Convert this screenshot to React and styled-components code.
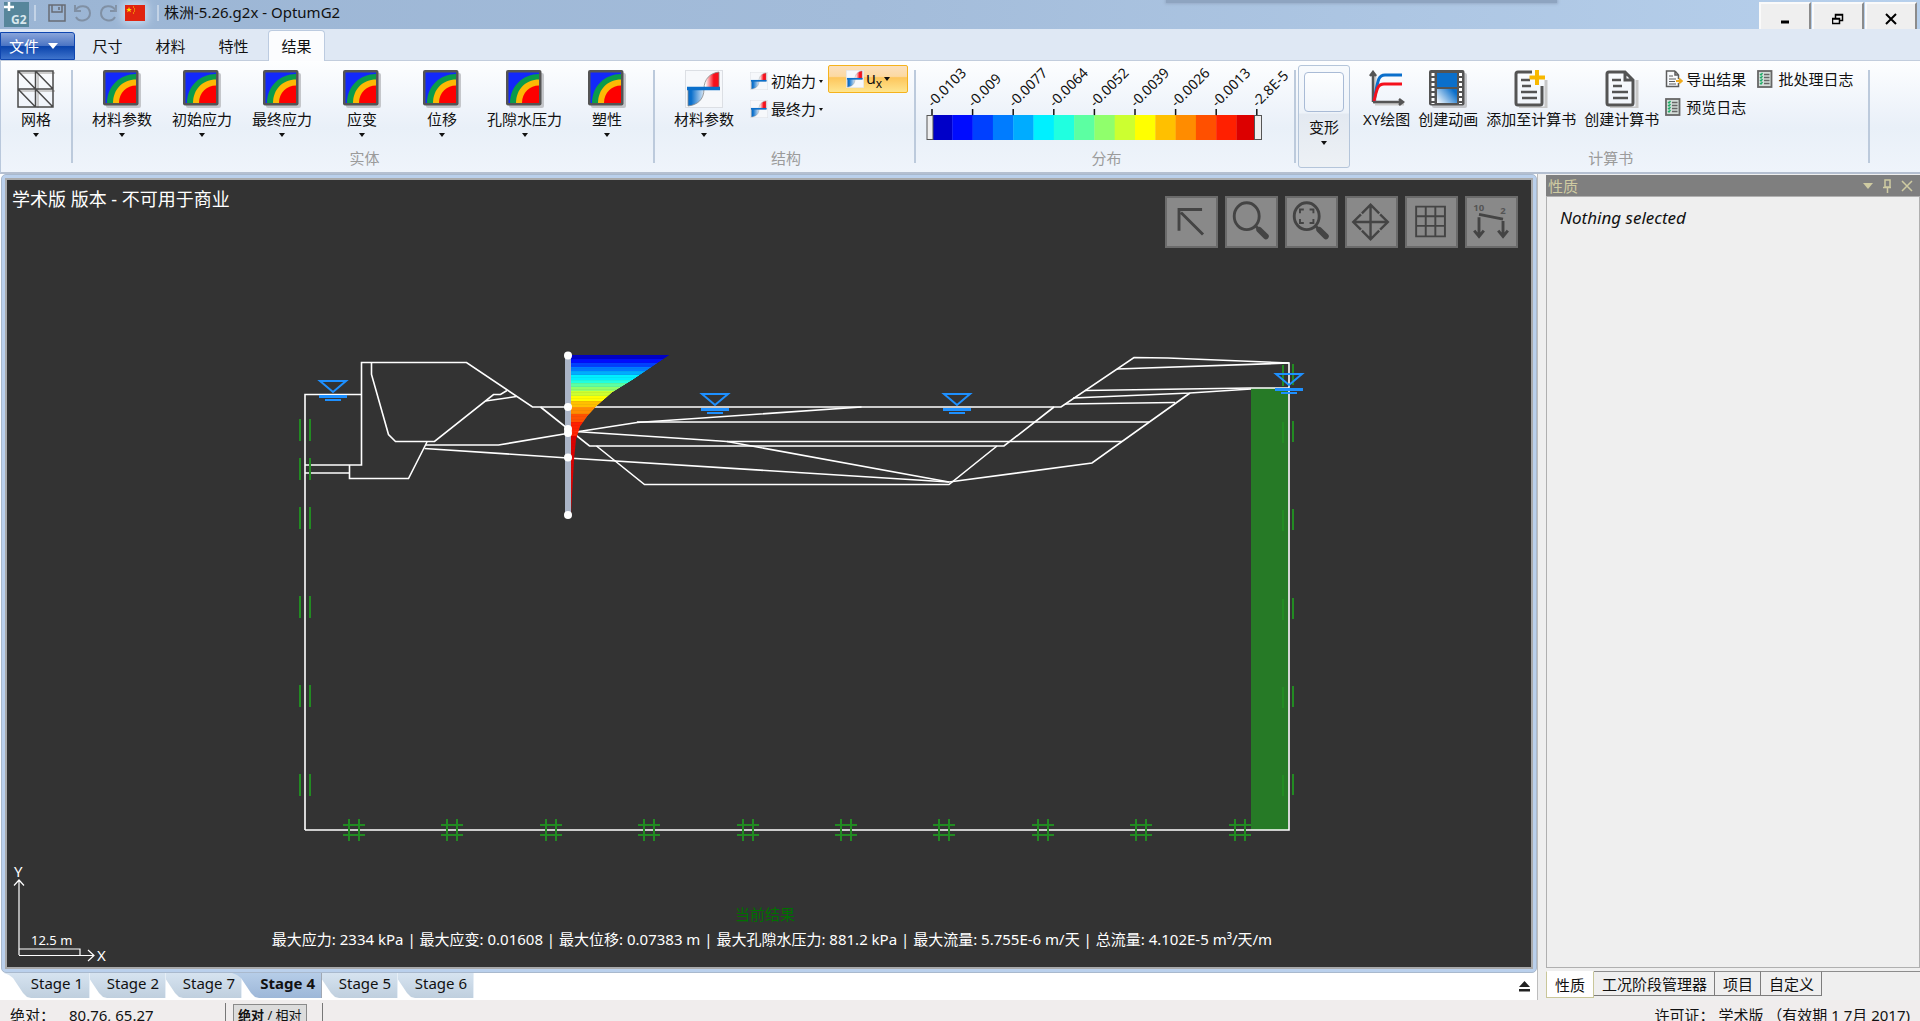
import React from 'react';
import styled, { createGlobalStyle } from 'styled-components';

const GlobalStyle = createGlobalStyle`
  * { box-sizing: border-box; }
  body {
    margin: 0;
    overflow: hidden;
    background: #efefef;
    color: #111;
    font: 15px/20px 'Noto Sans', 'Noto Sans CJK SC', sans-serif;
  }
  button {
    margin: 0;
    padding: 0;
    border: 0;
    background: none;
    color: inherit;
    font: inherit;
    white-space: nowrap;
  }
  svg { display: block; flex: none; }
`;

const Page = styled.div`
  display: flex;
  flex-direction: column;
  height: 100vh;
`;

/* ---------- title bar ---------- */

const TitleBar = styled.header`
  display: flex;
  flex: none;
  height: 29px;
  padding: 2px 3px 0 4px;
  align-items: flex-start;
  background: linear-gradient(90deg, #9bb5d4, #a3bcda 45%, #b7d0ec);
`;
const QuickTools = styled.div`
  display: flex;
  align-items: center;
  gap: 7px;
  margin: 3px 0 0 5px;
  padding: 0 12px;
  border-left: 2px solid #c3d3e6;
  border-right: 2px solid #c3d3e6;
  height: 16px;
`;
const FlagButton = styled.button`
  border-radius: 2px;
  box-shadow: 0 0 8px 3px #c9dcef;
`;
const WindowTitle = styled.h1`
  margin: 0 0 0 5px;
  flex: 1;
  font-size: 15px;
  line-height: 20px;
  font-weight: 400;
`;
const NotchShadow = styled.div`
  position: absolute;
  top: 0;
  right: 363px;
  width: 391px;
  height: 3px;
  background: #8ea4c0;
  box-shadow: 0 0 3px 1px #96abc6;
`;
const WindowButtons = styled.div`
  display: flex;
  gap: 1px;
`;
const WindowButton = styled.button`
  display: flex;
  width: 52px;
  height: 27px;
  padding-top: 4px;
  align-items: center;
  justify-content: center;
  background: #efefef;
  border: 2px solid #fafafa;
  border-right-color: #8b8b8b;
  border-bottom: 0;
`;

/* ---------- ribbon tabs ---------- */

const TabRow = styled.nav`
  display: flex;
  flex: none;
  height: 32px;
  align-items: flex-end;
  background: #dfe8f4;
  border-bottom: 1px solid #c2cddd;
`;
const FileButton = styled.button`
  display: flex;
  width: 75px;
  height: 28px;
  margin-right: 4px;
  padding-left: 8px;
  align-items: center;
  gap: 9px;
  color: #fff;
  border: 1px solid #0f46b0;
  border-radius: 0 3px 0 0;
  background: linear-gradient(#8aa5da, #4c75c4 48%, #0b44ac 52%, #3f74cc);
`;
const RibbonTab = styled.button`
  width: 57px;
  height: ${p => (p.$active ? 31 : 30)}px;
  margin: 0 6px ${p => (p.$active ? -1 : 0)}px 0;
  border-radius: 4px 4px 0 0;
  border: 1px solid ${p => (p.$active ? '#bccbe0' : 'transparent')};
  border-bottom: 0;
  background: ${p => (p.$active ? '#fbfcfe' : 'none')};
`;

/* ---------- ribbon ---------- */

const Ribbon = styled.section`
  display: flex;
  flex: none;
  height: 113px;
  border-left: 1px solid #b9c8dc;
  border-bottom: 2px solid #b4bfd0;
  background: linear-gradient(#fdfeff, #eef3fa 45%, #e9f0f8 60%, #eff4fb);
`;
const Group = styled.div`
  display: flex;
  flex-direction: column;
  padding: 4px 6px 4px 9px;
`;
const MeshGroup = styled(Group)`
  padding: 4px 5px;
`;
const GroupBody = styled.div`
  display: flex;
  flex: 1;
  align-items: flex-start;
`;
const GroupTitle = styled.div`
  text-align: center;
  color: #9b9b9b;
`;
const Separator = styled.div`
  width: 2px;
  margin: 9px 0;
  background: #bccadc;
`;
const BigButton = styled.button`
  display: flex;
  flex-direction: column;
  align-items: center;
  min-width: ${p => p.$min || 0}px;
  padding: 4px ${p => (p.$tight ? 4 : 5)}px 0;
`;
const BigIcon = styled.span`
  display: flex;
  height: 40px;
  align-items: center;
`;
const Arrow = styled.span`
  width: 0;
  height: 0;
  margin-top: ${p => (p.$below ? 4 : 0)}px;
  border: ${p => p.$size || 3}px solid transparent;
  border-top: ${p => (p.$size || 3) + 1}px solid currentColor;
  border-bottom: 0;
`;
const SmallColumn = styled.div`
  display: flex;
  flex-direction: column;
  padding: ${p => (p.$force ? '2px 5px 0 6px' : '0 9px 0 2px')};
`;
const SmallButton = styled.button`
  display: flex;
  height: 28px;
  align-items: center;
  gap: 3px;
`;
const DirectionButton = styled.button`
  display: flex;
  width: 80px;
  height: 28px;
  align-items: center;
  justify-content: center;
  gap: 2px;
  border: 1px solid #f5b21c;
  border-radius: 2px;
  background: linear-gradient(#fbe0bd, #fcd9a2 40%, #fdc65c 45%, #fee58f);
  font-size: 16px;
  sub { font-size: 12px; line-height: 12px; }
`;
const DeformButton = styled.button`
  display: flex;
  flex-direction: column;
  align-items: center;
  width: 52px;
  margin: 4px 0 4px 2px;
  padding-top: 6px;
  border: 1px solid #b4c5da;
  border-radius: 3px;
  background: linear-gradient(#f7fafd, #eef3f9 46%, #e3e9f1 48%, #edf1f5);
`;
const DeformSwatch = styled.span`
  width: 40px;
  height: 40px;
  margin-bottom: 5px;
  border: 1px solid #a9bbd6;
  border-radius: 4px;
  background: linear-gradient(#fdfeff, #eff4fa);
`;
const LegendChart = styled.svg`
  overflow: visible;
`;

/* ---------- work area ---------- */

const Work = styled.main`
  display: flex;
  flex: 1;
  min-height: 0;
`;
const Left = styled.section`
  display: flex;
  flex-direction: column;
  flex: 1;
  min-width: 0;
  padding-left: 1px;
  background: #fff;
`;
const Frame = styled.div`
  flex: 1;
  display: flex;
  min-height: 0;
  border: 1px solid #a9b9cd;
  border-radius: 5px;
  padding: 3px;
  background: #bad0ec;
`;
const Viewport = styled.div`
  position: relative;
  flex: 1;
  border: 2px solid #a9aaab;
  background: #333;
  color: #fff;
`;
const Scene = styled.svg`
  width: 100%;
  height: 100%;
`;
const Overlay = styled.div`
  position: absolute;
  inset: 0;
  display: flex;
  flex-direction: column;
  justify-content: space-between;
  padding: 8px 13px 15px 5px;
`;
const OverlayTop = styled.div`
  display: flex;
  justify-content: space-between;
  font-size: 18px;
  line-height: 22px;
`;
const ViewTools = styled.div`
  display: flex;
  gap: 7px;
  padding-top: 8px;
`;
const ViewTool = styled.button`
  width: 53px;
  height: 52px;
  border: 2px solid #6b6b6b;
  background: #898989;
`;
const Summary = styled.div`
  text-align: center;
  line-height: 25px;
`;
const CurrentResult = styled.div`
  color: #007000;
`;
const Totals = styled.div`
  padding-left: 14px;
`;

/* ---------- stage tabs ---------- */

const StageRow = styled.div`
  display: flex;
  flex: none;
  height: 27px;
  padding: 0 7px 0 3px;
  justify-content: space-between;
  background: #fff;
`;
const StageTabs = styled.div`
  display: flex;
  isolation: isolate;
`;
const StageTab = styled.button`
  position: relative;
  z-index: ${p => p.$z};
  width: ${p => (p.$active ? 90 : 86)}px;
  height: 25px;
  padding: 0 6px 5px 0;
  text-align: right;
  font-weight: ${p => (p.$active ? 700 : 400)};
  background: ${p => (p.$active
    ? 'linear-gradient(#b6cde8, #9db7d8)'
    : 'linear-gradient(#d6e3f0, #bfcfde)')};
  border-right: 1px solid ${p => (p.$active ? '#a0a8b4' : '#e6eef6')};
  clip-path: polygon(0 0, 5px 2px, 9px 5px, 15px 14px, 19px 20px, 23px 24px, 27px 25px, 100% 100%, 100% 0);
  & + & { margin-left: -10px; }
`;

/* ---------- side panel ---------- */

const Side = styled.aside`
  display: flex;
  flex-direction: column;
  width: 383px;
  padding: 1px 0 2px 8px;
  border-left: 1px solid #bdbdbd;
`;
const SideHeader = styled.header`
  display: flex;
  height: 21px;
  padding: 0 7px 0 2px;
  align-items: center;
  justify-content: space-between;
  color: #cfcba2;
  background: #7f7f7f;
`;
const SideIcons = styled.div`
  display: flex;
  align-items: center;
  gap: 9px;
`;
const SideBody = styled.div`
  flex: 1;
  padding: 11px 13px;
  border: 1px solid #b0b0b0;
  font-size: 17px;
  font-style: italic;
`;
const SideTabs = styled.div`
  display: flex;
  height: 30px;
  align-items: flex-start;
  padding-top: 3px;
  background: linear-gradient(#efefef 3px, #8d8d8d 3px, #8d8d8d 4px, #efefef 4px);
`;
const SideTab = styled.button`
  height: ${p => (p.$active ? 27 : 25)}px;
  padding: 0 ${p => (p.$active ? 8 : 7)}px 0 8px;
  border: 1px solid ${p => (p.$active ? '#c9c79a' : '#7d7d7d')};
  border-left-width: ${p => (p.$active ? 1 : 0)}px;
  border-top-color: ${p => (p.$active ? '#fff' : '#8d8d8d')};
  background: ${p => (p.$active ? '#fff' : '#efefef')};
`;

/* ---------- status bar ---------- */

const StatusBar = styled.footer`
  display: flex;
  flex: none;
  height: 21px;
  padding: 3px 10px 0;
  overflow: hidden;
  background: #f0eded;
`;
const Coordinates = styled.div`
  display: flex;
  width: 215px;
  gap: 14px;
  padding-top: 2px;
`;
const ModeCell = styled.div`
  padding: 1px 15px 0 7px;
  border-left: 1px solid #777;
  border-right: 1px solid #777;
`;
const ModeButton = styled.button`
  height: 24px;
  padding: 0 4px 4px;
  border: 1px solid #8a8a8a;
  background: #dcdcdc;
  font-size: 13px;
`;
const Licence = styled.div`
  margin-left: auto;
  padding-top: 2px;
`;

/* ---------- icons ---------- */

const MeshIcon = () => (
  <svg width="38" height="38" viewBox="0 0 38 38" fill="none">
    <path d="M3 3h36v36M3 21h36M21 3v36" stroke="#ccc" strokeWidth="2" />
    <path d="M1 1h35v36H1zM1 19h35M18.500 1v36M1 1l35 36M18.500 1L36 19M1 19l17.500 18" stroke="#4a4a4a" strokeWidth="1.500" />
  </svg>
);

const ContourIcon = () => (
  <svg width="38" height="38" viewBox="0 0 38 38">
    <rect x="3" y="3" width="35" height="35" rx="2" fill="#c4c6ca" />
    <rect width="35.500" height="35.500" rx="2" fill="#545454" />
    <rect x="2.500" y="2.500" width="30.500" height="30.500" fill="#1228fb" />
    <path d="M33 33H4C4 16 17 4 33 4z" fill="#0a9b4b" />
    <path d="M33 33H10C10 19 20 9.500 33 9.500z" fill="#fdb904" />
    <path d="M33 33H16C16 22 24 15.500 33 15.500z" fill="#fe0000" />
  </svg>
);

const ForceIcon = ({ size }) => (
  <svg width={size} height={size} viewBox="0 0 38 38">
    <defs>
      <linearGradient id="forceRed"><stop offset="0.100" stopColor="#fff" /><stop offset="0.650" stopColor="#f8101c" /></linearGradient>
      <linearGradient id="forceBlue"><stop offset="0.200" stopColor="#0a6fcb" /><stop offset="1" stopColor="#dce9f6" /></linearGradient>
    </defs>
    <rect x="0.500" y="0.500" width="37" height="37" fill="#f6f8fb" stroke="#dcdfe4" />
    <path d="M34 19V2c-9 1-15 7-15 17z" fill="url(#forceRed)" stroke="#888" strokeWidth="0.800" />
    <path d="M3 19v17c9-1 16-6 16-17z" fill="url(#forceBlue)" stroke="#888" strokeWidth="0.800" />
    <path d="M2 18.500h33" stroke="#0a6fcb" strokeWidth="3.500" />
  </svg>
);

const PlotIcon = () => (
  <svg width="36" height="38" viewBox="0 0 36 38" fill="none">
    <path d="M6 34h29M6 34V5" stroke="#ccc" strokeWidth="3" />
    <path d="M4 32h28M4 32V4M1 6l3-4 3 4M30 29l4 3-4 3" stroke="#555" strokeWidth="2.500" />
    <path d="M5 31C9 10 9 5 16 5h17" stroke="#0a6fcb" strokeWidth="3" />
    <path d="M5 31C8 18 9 14 15 14h18" stroke="#f5101c" strokeWidth="3" />
  </svg>
);

const FilmIcon = () => (
  <svg width="38" height="38" viewBox="0 0 38 38">
    <defs>
      <linearGradient id="film" x1="1" y1="0.400" x2="0" y2="1"><stop offset="0" stopColor="#0a6fcb" /><stop offset="1" stopColor="#fff" /></linearGradient>
    </defs>
    <rect x="3" y="3" width="35" height="35" rx="2" fill="#c4c6ca" />
    <rect width="35.500" height="35.500" rx="2" fill="#545454" />
    <rect x="8" y="3" width="20" height="14" fill="#0a6fcb" />
    <rect x="8" y="19" width="20" height="14" fill="url(#film)" />
    <path d="M4 3v31M31.500 3v31" stroke="#fff" strokeWidth="3" strokeDasharray="3 2" />
  </svg>
);

const PageIcon = ({ plus }) => (
  <svg width="34" height="38" viewBox="0 0 34 38" fill="none" strokeWidth="3">
    <path d="M5 38h27V10" stroke="#c8c8c8" />
    <path d={plus ? 'M18 2H4q-2 0-2 2v29q0 2 2 2h22q2 0 2-2V16' : 'M20 2H4q-2 0-2 2v29q0 2 2 2h22q2 0 2-2V10zM20 2v8h8'} stroke="#545454" />
    <path d="M7 10h9M8 16h9M7 22h16M8 28h15" stroke="#545454" strokeWidth="2.500" />
    {plus && <path d="M23 0v15M15.500 7.500H31" stroke="#f8b800" strokeWidth="4" />}
  </svg>
);

const ExportIcon = () => (
  <svg width="18" height="18" viewBox="0 0 18 18" fill="none">
    <path d="M10 1H1.500v15.500h12V13M10 1l3.500 4v4M10 1v4h3" stroke="#5c5c5c" strokeWidth="1.500" />
    <path d="M4 6h4M4 9h7M4 11.500h6M4 14h7" stroke="#5c5c5c" />
    <path d="M11 11h5M14 8.500l3 2.500-3 2.500" stroke="#f0ab1c" strokeWidth="1.800" />
  </svg>
);

const LogIcon = () => (
  <svg width="18" height="18" viewBox="0 0 18 18" fill="none">
    <rect x="1" y="1" width="13.500" height="16" fill="#d3dcd8" stroke="#666" strokeWidth="1.800" />
    <path d="M7 4.500h5.500M7 7.500h5.500M7 10.500h5.500M7 13.500h5.500" stroke="#666" strokeWidth="1.300" />
    <path d="M3 4l1 1 1.500-2M3 7l1 1 1.500-2M3 10l1 1 1.500-2M3 13l1 1 1.500-2" stroke="#1fae6a" strokeWidth="1.300" />
  </svg>
);

const LogoIcon = () => (
  <svg width="25" height="25" viewBox="0 0 25 25">
    <rect width="25" height="25" fill="#57869b" />
    <path d="M5 0v9M0 5h10" stroke="#fff" strokeWidth="2.500" />
    <text x="7" y="22" fontSize="12" fontWeight="700" fill="#d9e8ee">G2</text>
  </svg>
);

const SaveIcon = () => (
  <svg width="18" height="18" viewBox="0 0 18 18" fill="none" stroke="#686c74" strokeWidth="1.500">
    <path d="M1 1h16v16H1zM4 1v7h10V1M11 3v3" />
  </svg>
);

const TurnIcon = ({ flip }) => (
  <svg width="19" height="18" viewBox="0 0 19 18" fill="none" stroke="#8090a4" strokeWidth="2">
    <g transform={flip ? 'translate(19 0) scale(-1 1)' : undefined}>
      <path d="M2 1v6h6M2.500 6.500C5 1 16 0 17 9c0 8-11 10-14 4" />
    </g>
  </svg>
);

const FlagIcon = () => (
  <svg width="20" height="16" viewBox="0 0 20 16">
    <rect width="20" height="16" fill="#e02410" />
    <path d="M4 2l.8 2h2L5.200 5.200 6 7.200 4 6 2 7.200l.8-2L1.200 4h2z" fill="#fd0" />
    <path d="M8 2h1M9 4h1M9 6h1M8 8h1" stroke="#fd0" />
  </svg>
);

const VIEW_ICONS = [
  ['选择', <path key="a" d="M12 34V12h24M14 15l23 23" />],
  ['缩放', <g key="b"><ellipse cx="20" cy="19" rx="13" ry="14" /><path d="M29 29l5 5" /><path d="M33 33l7 7" strokeWidth="6" strokeLinecap="round" /></g>],
  ['缩放全部', <g key="c"><ellipse cx="20" cy="19" rx="13" ry="14" /><path d="M13 16v-4h4M23 12h4v4M27 22v4h-4M17 26h-4v-4" strokeWidth="2" /><path d="M29 29l5 5" /><path d="M33 33l7 7" strokeWidth="6" strokeLinecap="round" /></g>],
  ['平移', <path key="d" d="M24 8v34M7 25h34M15 16l9-9 9 9M15 34l9 9 9-9M14 17l-8 8 8 8M34 17l8 8-8 8" strokeWidth="2.500" />],
  ['网格', <path key="e" d="M9 9h30v31H9zM19 9v31M29 9v31M9 19h30M9 29h30" strokeWidth="2" />],
  ['荷载', <g key="f"><path d="M12 17l25 5M12 20v20M37 24v16M7 34l5 6 5-6M32 34l5 6 5-6" /><text x="6" y="14" fontSize="10" fontWeight="700" fill="#555" stroke="none">10</text><text x="34" y="17" fontSize="10" fontWeight="700" fill="#555" stroke="none">2</text></g>],
];

/* ---------- results data ---------- */

const PALETTE = [
  '#0000c8', '#000cff', '#0040ff', '#007cff', '#00acff', '#00f0ff', '#20ffe0', '#5cffa2',
  '#90ff6c', '#ccff30', '#ffff00', '#ffc000', '#ff8c00', '#ff5000', '#ff2000', '#dc0000',
];
const TICKS = ['-0.0103', '-0.009', '-0.0077', '-0.0064', '-0.0052', '-0.0039', '-0.0026', '-0.0013', '-2.8E-5'];

const SOLID_RESULTS = ['材料参数', '初始应力', '最终应力', '应变', '位移', '孔隙水压力', '塑性'];
const STAGES = [1, 2, 7, 4, 5, 6];

const Legend = () => (
  <LegendChart width="363" height="80" viewBox="925 65 363 80">
    {TICKS.map((t, i) => {
      const x = 932 + i * 40.6;
      return (
        <g key={t}>
          <path d={`M${x} 109v7`} stroke="#111" strokeWidth="1.500" />
          <text transform={`translate(${x + 1} 108) rotate(-45)`} fontSize="14" fill="#111">{t}</text>
        </g>
      );
    })}
    {PALETTE.map((c, i) => <rect key={c} x={932 + i * 20.3} y="115" width="20.600" height="25" fill={c} />)}
    <rect x="927" y="115.500" width="6" height="24" fill="#eee" stroke="#555" />
    <rect x="1254.500" y="115.500" width="7" height="24" fill="#eee" stroke="#555" />
  </LegendChart>
);

// displacement along the wall: [depth, width]
const PROFILE = [[355, 99], [380, 62], [393, 41], [407, 25], [417, 16], [427, 9], [440, 5], [460, 3], [515, 0]];

const widthAt = (y) => {
  const i = PROFILE.findIndex(([d]) => d >= y) || 1;
  const [y0, w0] = PROFILE[i - 1];
  const [y1, w1] = PROFILE[i];
  return w0 + ((w1 - w0) * (y - y0)) / (y1 - y0);
};

const SOIL_LINES = [
  '305,830 305,394.500 361.500,394.500',
  '305,465 361.500,465 361.500,362.500 466.500,362.500 532.500,407 1061,407 1134,357.500 1168,358 1289,363 1289,830 305,830',
  '305,473 349.500,473',
  '349.500,465 349.500,478.500 408.500,478.500 427,442',
  '371.500,362.500 371.500,374.500 388.500,434.500 395.500,441.500 434.500,441.500 493.500,394.500 500.500,394.500 507,390.500',
  '485.500,401 516.500,396.500',
  '426,445 498.500,445 579,431.500 637,422.500 861.500,407',
  '424.500,448.500 568,458 949,482 1092,463 1190,393',
  '540.500,407 589.500,446 1004,446 1054,407',
  '596.500,446 644.500,484.500 949,484.500 997,446',
  '637,422 1149,422',
  '575,431.500 690,439 727,441.500 1122,441.500',
  '727,441.500 949,482',
  '1117,369 1289,363',
  '1085,390.500 1251,388 1289,388',
  '1073,398 1190,393 1251,389',
  '1065,404 1175,402.500',
];
const WATER = [[333, 381], [715, 394], [957, 394], [1289, 374]];
const LEFT_SUPPORTS = [430, 469, 518, 607, 696, 785];
const RIGHT_SUPPORTS = [375, 432, 520, 609, 697, 785];
const WALL_NODES = [355.5, 407, 429, 433, 457.5, 515];

const Model = () => (
  <Scene viewBox="7 180 1524 787" preserveAspectRatio="xMidYMid meet" fill="none">
    <rect x="1251" y="388" width="37" height="442" fill="#267a26" />
    <g stroke="#fff" strokeWidth="1.600">
      {SOIL_LINES.map(p => <polyline key={p} points={p} />)}
    </g>
    <g stroke="#228b22" strokeWidth="2">
      {LEFT_SUPPORTS.map(y => <path key={y} d={`M300 ${y - 11}v22M310 ${y - 11}v22`} />)}
      {RIGHT_SUPPORTS.map(y => <path key={y} d={`M1283 ${y - 10}v21M1293 ${y - 11}v21`} />)}
      {Array.from({ length: 10 }, (_, i) => 354 + Math.round(i * 98.4)).map(x => (
        <path key={x} d={`M${x - 11} 825h22M${x - 11} 835h22M${x - 5} 819v22M${x + 5} 819v22`} />
      ))}
    </g>
    {Array.from({ length: 159 }, (_, i) => 356 + i).map(y => {
      const w = widthAt(y);
      return (
        <rect
          key={y}
          x="571"
          y={y - 1}
          width={w}
          height="1"
          fill={PALETTE[Math.min(15, Math.floor((1 - w / 99) * 16))]}
          opacity={y % 3 ? 1 : 0.94}
        />
      );
    })}
    <path d="M568 355v160" stroke="#aab4c6" strokeWidth="6" />
    {WALL_NODES.map(y => <circle key={y} cx="568" cy={y} r="4" fill="#fff" />)}
    {WATER.map(([x, y]) => (
      <g key={x} stroke="#1e90ff" strokeWidth="2">
        <path d={`M${x - 13} ${y}h26l-13 11z`} />
        <path d={`M${x - 14} ${y + 15.5}h28`} strokeWidth="3" />
        <path d={`M${x - 8} ${y + 19}h16`} />
      </g>
    ))}
    <g stroke="#fff" strokeWidth="1.200">
      <path d="M19 955V880M14 885.500l5-5.500 5 5.500M19 955.500h75M88 950l6 5.500-6 5.500M19 949h61v6" />
    </g>
    <g fill="#fff" fontSize="15">
      <text x="14" y="877">Y</text>
      <text x="97" y="961">X</text>
      <text x="31" y="945" fontSize="13">12.5 m</text>
    </g>
  </Scene>
);

const Big = ({ icon, label, arrow, min, tight }) => (
  <BigButton $min={min} $tight={tight}>
    <BigIcon>{icon}</BigIcon>
    {label}
    {arrow && <Arrow $below />}
  </BigButton>
);

export default function App() {
  return (
    <Page>
      <GlobalStyle />
      <TitleBar>
        <LogoIcon />
        <QuickTools>
          <button aria-label="保存"><SaveIcon /></button>
          <button aria-label="撤销"><TurnIcon /></button>
          <button aria-label="重做"><TurnIcon flip /></button>
          <FlagButton aria-label="语言"><FlagIcon /></FlagButton>
        </QuickTools>
        <WindowTitle>株洲-5.26.g2x - OptumG2</WindowTitle>
        <NotchShadow />
        <WindowButtons>
          <WindowButton aria-label="最小化">
            <svg width="12" height="12"><path d="M2 9h8" stroke="#000" strokeWidth="3" /></svg>
          </WindowButton>
          <WindowButton aria-label="还原">
            <svg width="12" height="12" fill="none" stroke="#000"><path d="M3.500 5V1.500h7v6H8M3 2h8M.5 5.500h7v5h-7zM0 6h8" strokeWidth="1.500" /></svg>
          </WindowButton>
          <WindowButton aria-label="关闭">
            <svg width="12" height="12"><path d="M1 1l10 10M11 1L1 11" stroke="#000" strokeWidth="2" /></svg>
          </WindowButton>
        </WindowButtons>
      </TitleBar>

      <TabRow>
        <FileButton>文件<Arrow $size={5} /></FileButton>
        <RibbonTab>尺寸</RibbonTab>
        <RibbonTab>材料</RibbonTab>
        <RibbonTab>特性</RibbonTab>
        <RibbonTab $active>结果</RibbonTab>
      </TabRow>

      <Ribbon>
        <MeshGroup>
          <Big icon={<MeshIcon />} label="网格" arrow min={60} />
        </MeshGroup>
        <Separator />
        <Group>
          <GroupBody>
            {SOLID_RESULTS.map(label => (
              <Big key={label} icon={<ContourIcon />} label={label} arrow min={80} />
            ))}
          </GroupBody>
          <GroupTitle>实体</GroupTitle>
        </Group>
        <Separator />
        <Group>
          <GroupBody>
            <Big icon={<ForceIcon size={38} />} label="材料参数" arrow min={80} />
            <SmallColumn $force>
              <SmallButton><ForceIcon size={18} />初始力<Arrow $size={2} /></SmallButton>
              <SmallButton><ForceIcon size={18} />最终力<Arrow $size={2} /></SmallButton>
            </SmallColumn>
            <DirectionButton>
              <ForceIcon size={18} />
              <span>u<sub>x</sub></span>
              <Arrow />
            </DirectionButton>
          </GroupBody>
          <GroupTitle>结构</GroupTitle>
        </Group>
        <Separator />
        <Group>
          <GroupBody><Legend /></GroupBody>
          <GroupTitle>分布</GroupTitle>
        </Group>
        <Separator />
        <DeformButton>
          <DeformSwatch />
          变形
          <Arrow $below />
        </DeformButton>
        <Group>
          <GroupBody>
            <Big tight icon={<PlotIcon />} label="XY绘图" />
            <Big tight icon={<FilmIcon />} label="创建动画" />
            <Big tight icon={<PageIcon plus />} label="添加至计算书" />
            <Big tight icon={<PageIcon />} label="创建计算书" />
            <SmallColumn>
              <SmallButton><ExportIcon />导出结果</SmallButton>
              <SmallButton><LogIcon />预览日志</SmallButton>
            </SmallColumn>
            <SmallColumn>
              <SmallButton><LogIcon />批处理日志</SmallButton>
            </SmallColumn>
          </GroupBody>
          <GroupTitle>计算书</GroupTitle>
        </Group>
        <Separator />
      </Ribbon>

      <Work>
        <Left>
          <Frame>
            <Viewport>
              <Model />
              <Overlay>
                <OverlayTop>
                  <span>学术版 版本 - 不可用于商业</span>
                  <ViewTools>
                    {VIEW_ICONS.map(([name, icon]) => (
                      <ViewTool key={name} aria-label={name}>
                        <svg width="49" height="48" viewBox="0 0 50 50" fill="none" stroke="#444" strokeWidth="3">{icon}</svg>
                      </ViewTool>
                    ))}
                  </ViewTools>
                </OverlayTop>
                <Summary>
                  <CurrentResult>当前结果</CurrentResult>
                  <Totals>
                    最大应力: 2334 kPa | 最大应变: 0.01608 | 最大位移: 0.07383 m | 最大孔隙水压力: 881.2 kPa | 最大流量: 5.755E-6 m/天 | 总流量: 4.102E-5 m³/天/m
                  </Totals>
                </Summary>
              </Overlay>
            </Viewport>
          </Frame>
          <StageRow>
            <StageTabs>
              {STAGES.map((n, i) => (
                <StageTab key={n} $active={n === 4} $z={n === 4 ? 10 : 9 - i}>Stage {n}</StageTab>
              ))}
            </StageTabs>
            <button aria-label="展开">
              <svg width="11" height="11" fill="#222"><path d="M5.500 0L11 6H0zM0 8h11v2.500H0z" /></svg>
            </button>
          </StageRow>
        </Left>
        <Side>
          <SideHeader>
            性质
            <SideIcons>
              <Arrow $size={5} />
              <svg width="10" height="14" fill="none" stroke="currentColor" strokeWidth="1.500"><path d="M3 1h5v7H3zM1 8.500h8M5.500 9v5" /></svg>
              <svg width="12" height="12" stroke="currentColor" strokeWidth="1.500"><path d="M1 1l10 10M11 1L1 11" /></svg>
            </SideIcons>
          </SideHeader>
          <SideBody>Nothing selected</SideBody>
          <SideTabs>
            <SideTab $active>性质</SideTab>
            <SideTab>工况阶段管理器</SideTab>
            <SideTab>项目</SideTab>
            <SideTab>自定义</SideTab>
          </SideTabs>
        </Side>
      </Work>

      <StatusBar>
        <Coordinates><span>绝对：</span><span>80.76, 65.27</span></Coordinates>
        <ModeCell><ModeButton><b>绝对</b> / 相对</ModeButton></ModeCell>
        <Licence>许可证： 学术版 （有效期 1 7月 2017)</Licence>
      </StatusBar>
    </Page>
  );
}
